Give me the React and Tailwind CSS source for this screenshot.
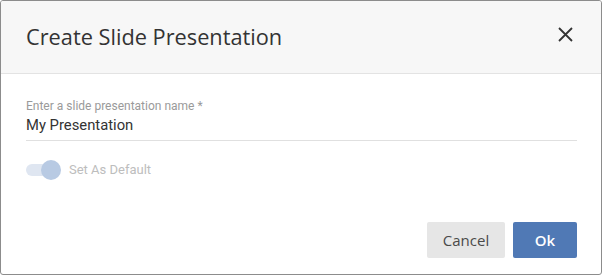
import React from 'react';

const App = () => {
  return (
    <div className="w-[602px] h-[275px] bg-white">
      <div className="w-full h-full flex flex-col border border-[#8c8c8c] rounded-[3px] overflow-hidden bg-white">
        <div className="h-[73px] shrink-0 flex items-center justify-between pl-[25px] pr-[28px] bg-[#f7f7f7] border-b border-[#e3e3e3]">
          <h2 className="text-[21.75px] text-[#333] font-['Open_Sans',sans-serif]">Create Slide Presentation</h2>
          <button className="w-[15px] h-[15px] mb-[6px] flex items-center justify-center text-[#333]">
            <svg width="15" height="15" viewBox="0 0 15 15" fill="none" stroke="currentColor" strokeWidth="1.8">
              <path d="M1 1L14 14M14 1L1 14" />
            </svg>
          </button>
        </div>
        <div className="flex-1 flex flex-col pl-[25px] pr-[24px] pt-[25px] font-['Roboto',sans-serif]">
          <label className="text-[12px] leading-[14px] text-[#9a9a9a]">Enter a slide presentation name *</label>
          <div className="mt-[3px] pb-[5px] border-b border-[#e0e0e0] text-[14.8px] leading-[19px] text-[#333]">My Presentation</div>
          <div className="mt-[19px] flex items-center">
            <div className="relative w-[36px] h-[20px] flex items-center">
              <div className="w-[30px] h-[12px] rounded-full bg-[#dfe6f1]" />
              <div className="absolute left-[15px] top-0 w-[20px] h-[20px] rounded-full bg-[#b8cae3]" />
            </div>
            <span className="ml-[7px] text-[13px] text-[#bdbdbd]">Set As Default</span>
          </div>
          <div className="mt-auto mb-[16px] flex justify-end gap-[8px] font-['Open_Sans',sans-serif]">
            <button className="w-[78px] h-[36px] rounded-[2px] bg-[#e6e6e6] text-[15px] text-[#4a4a4a]">Cancel</button>
            <button className="w-[64px] h-[36px] rounded-[2px] bg-[#5079b5] text-[15px] text-white font-semibold">Ok</button>
          </div>
        </div>
      </div>
    </div>
  );
};

export default App;
